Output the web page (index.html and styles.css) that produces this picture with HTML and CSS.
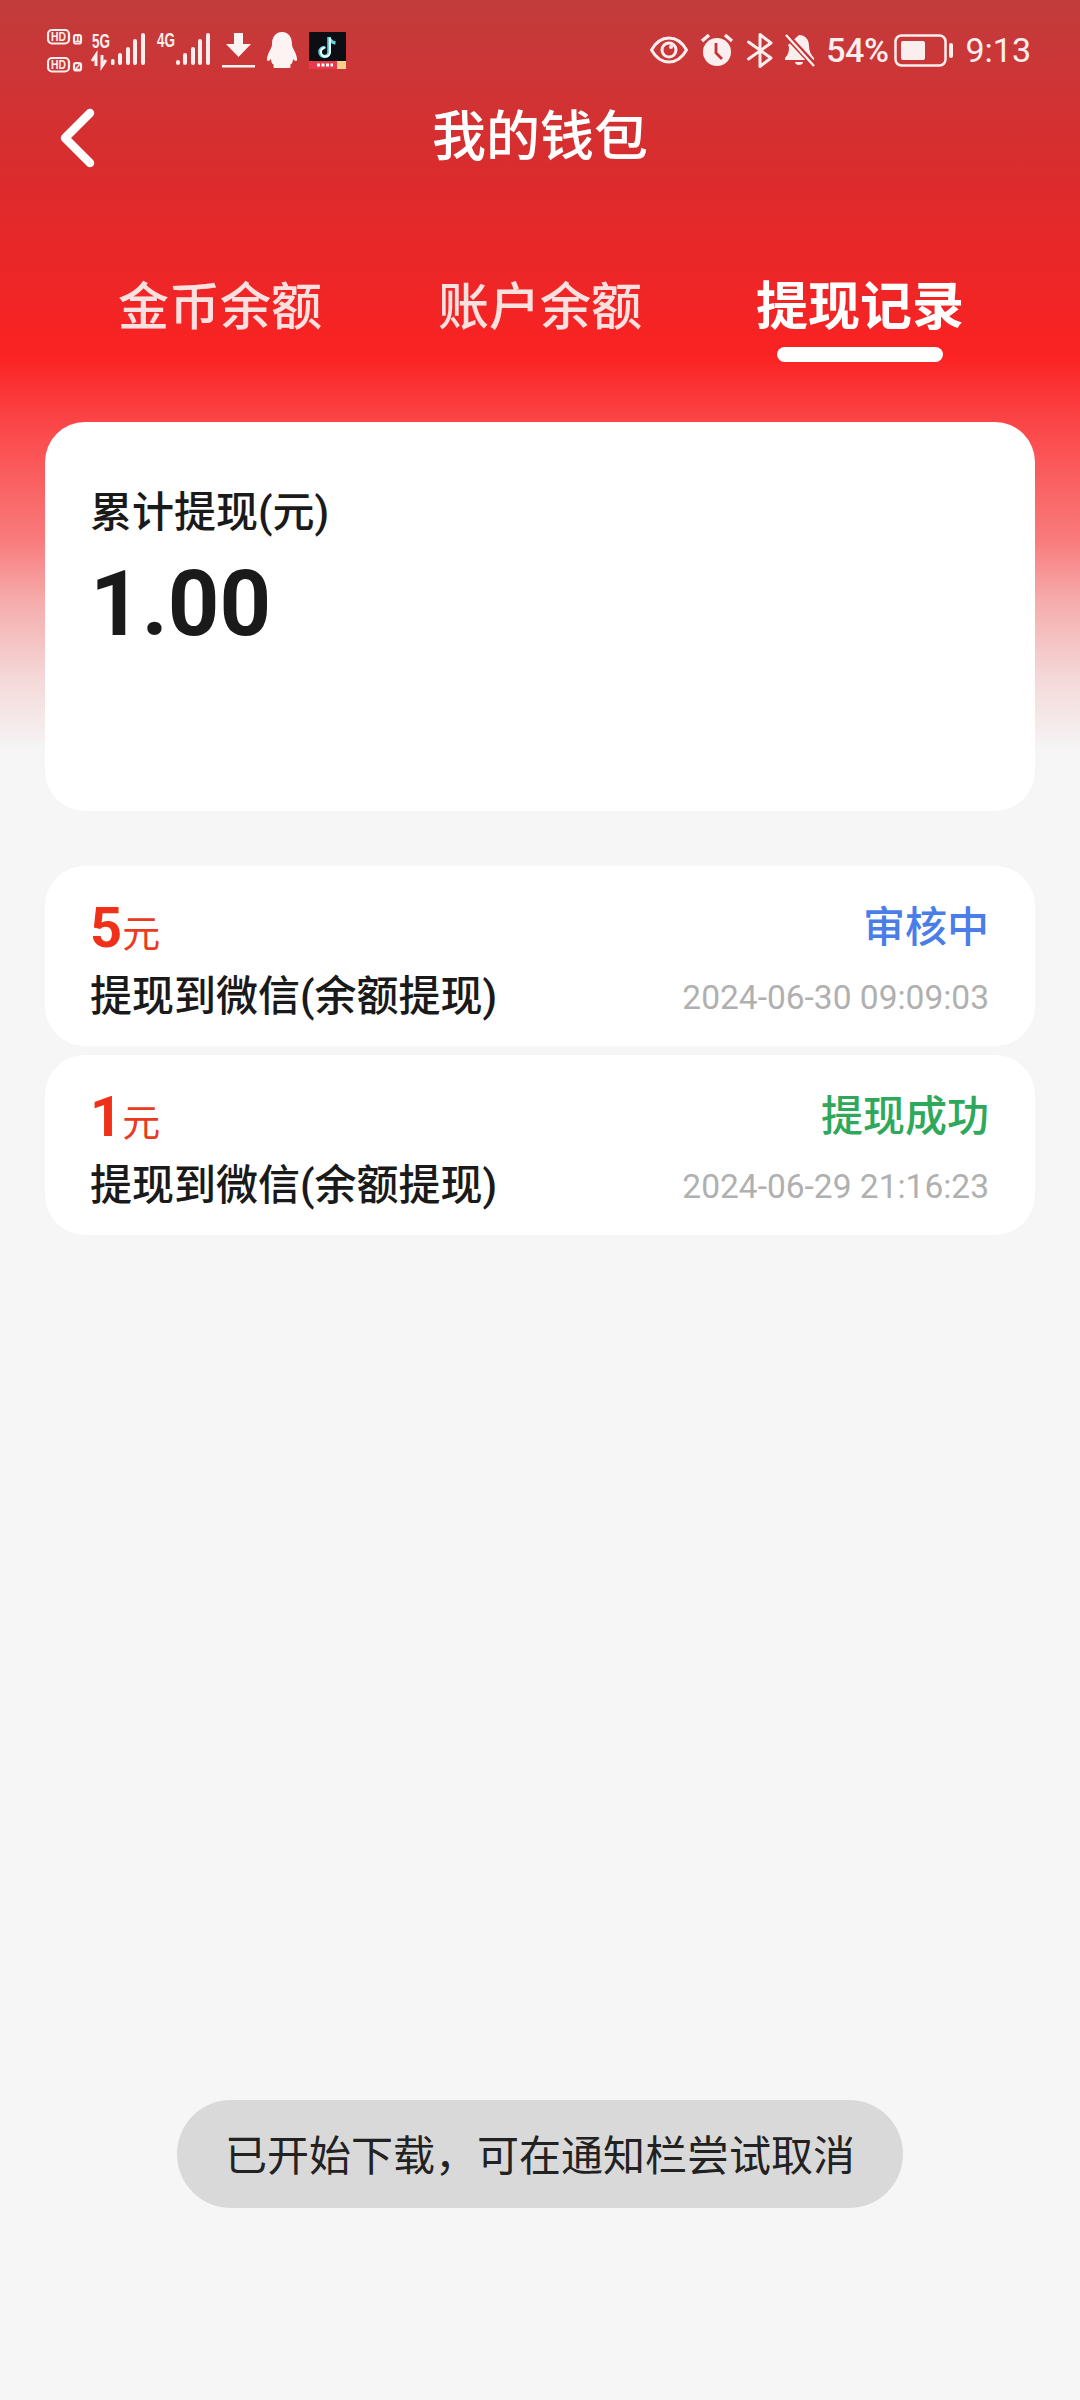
FILE: index.html
```html
<!DOCTYPE html>
<html>
<head>
    <title>我的钱包</title>
    <link rel="stylesheet" href="styles.css">
</head>
<body>
    <div class="status">
        <div class="status-left">
            <svg class="sim" width="165" height="50" viewBox="0 0 165 50">
                <g fill="none" stroke="#fbeeee" stroke-width="2.200">
                    <rect x="1" y="5" width="21" height="13.500" rx="4"/>
                    <rect x="1" y="33" width="21" height="13.500" rx="4"/>
                    <rect x="27" y="10" width="7" height="8.500" rx="2"/>
                    <rect x="27" y="38" width="7" height="7.500" rx="2"/>
                </g>
                <text class="sim-hd" x="11.500" y="16" textLength="15" lengthAdjust="spacingAndGlyphs">HD</text>
                <text class="sim-hd" x="11.500" y="44" textLength="15" lengthAdjust="spacingAndGlyphs">HD</text>
                <text class="sim-num" x="30.500" y="17">1</text>
                <text class="sim-num" x="30.500" y="45">2</text>
                <text class="sim-net" x="45" y="23" textLength="18" lengthAdjust="spacingAndGlyphs">5G</text>
                <text class="sim-net" x="110" y="22" textLength="18" lengthAdjust="spacingAndGlyphs">4G</text>
                <path d="M49 41V30l-4 6M55 30v11l4-6" fill="none" stroke="#fbeeee" stroke-width="3"/>
                <g fill="#fbeeee">
                    <rect x="64" y="34" width="3.500" height="6" rx="1.500"/>
                    <rect x="71" y="28" width="4" height="12" rx="2"/>
                    <rect x="79" y="22" width="4" height="18" rx="2"/>
                    <rect x="86" y="14" width="4" height="26" rx="2"/>
                    <rect x="94" y="8" width="4" height="32" rx="2"/>
                    <rect x="129" y="35" width="4" height="5" rx="2"/>
                    <rect x="136" y="28" width="4" height="12" rx="2"/>
                    <rect x="144" y="22" width="4" height="18" rx="2"/>
                    <rect x="151" y="14" width="4" height="26" rx="2"/>
                    <rect x="159" y="8" width="4" height="32" rx="2"/>
                </g>
            </svg>
            <svg width="33" height="36" viewBox="0 0 33 36">
                <path d="M12 1h9v11h8L16.500 25 4 12h8z" fill="#fdf3f3"/>
                <rect y="33" width="33" height="2.500" fill="#fdf3f3"/>
            </svg>
            <svg width="32" height="36" viewBox="0 0 32 36">
                <path d="M16 0c7 0 10 6 10 12 0 3 1 4 3 8 2 5 3 9 1 9-1 0-2-1-3-2 0 3-1 5-3 6 1 1 1 3-1 3H9c-2 0-2-2-1-3-2-1-3-3-3-6-1 1-2 2-3 2-2 0-1-4 1-9 2-4 3-5 3-8C6 6 9 0 16 0z" fill="#fdf3f3"/>
            </svg>
            <svg width="37" height="37" viewBox="0 0 37 37">
                <rect width="37" height="37" fill="#0d0d14"/>
                <path d="M20 5v15a4.500 4.500 0 1 1-4.500-4.500M20 5c.5 3 3 5.500 6.500 6" fill="none" stroke="#5fd5dc" stroke-width="3.500"/>
                <path d="M21 6v14a4.500 4.500 0 1 1-4.500-4.500" fill="none" stroke="#fff" stroke-width="2"/>
                <rect y="29" width="28" height="8" fill="#e83a4a"/>
                <rect x="28" y="29" width="9" height="8" fill="#f4d08c"/>
                <path d="M8 33h16" stroke="#fff" stroke-width="3" stroke-dasharray="3 1.500"/>
            </svg>
        </div>
        <div class="status-right">
            <svg class="eye" width="38" height="28" viewBox="0 0 38 28">
                <path d="M1.500 14C6 6 12 2 19 2s13 4 17.500 12C32 22 26 26 19 26S6 22 1.500 14z" fill="none" stroke="#fbeeee" stroke-width="3"/>
                <circle cx="19" cy="14" r="7" fill="none" stroke="#fbeeee" stroke-width="3"/>
                <circle cx="21" cy="11" r="2" fill="#fbeeee"/>
            </svg>
            <svg class="alarm" width="34" height="34" viewBox="0 0 34 34">
                <circle cx="17" cy="19" r="14" fill="#fbeeee"/>
                <path d="M16 10v10l6 6" fill="none" stroke="#c9302f" stroke-width="2.800"/>
                <path d="M2 8l7-6M32 8l-7-6" stroke="#fbeeee" stroke-width="3.500"/>
            </svg>
            <svg class="bt" width="27" height="35" viewBox="0 0 27 35">
                <path d="M1.500 9L24 25 13 33.500V1.500L24 10 1.500 26" fill="none" stroke="#fbeeee" stroke-width="3" stroke-linecap="round" stroke-linejoin="round"/>
            </svg>
            <svg class="bell" width="31" height="33" viewBox="0 0 31 33">
                <path d="M15 1c6 0 10 4 10 11 0 5 2 9 5 12v2H1v-2c3-3 4-6 4-11l-1-2zM11 28h8c0 2-2 3-4 3s-4-1-4-3z" fill="#fbeeee"/>
                <path d="M3 2l27 29" stroke="#c9302f" stroke-width="6"/>
                <path d="M2 1l28 31" stroke="#fbeeee" stroke-width="2.500"/>
            </svg>
            <span class="status-text percent">54%</span>
            <svg class="battery" width="60" height="33" viewBox="0 0 60 33">
                <rect x="1.500" y="1.500" width="50" height="30" rx="6" fill="none" stroke="#fbeeee" stroke-width="2.500"/>
                <rect x="7" y="7" width="24" height="19" rx="2" fill="#fbeeee"/>
                <rect x="55" y="9" width="4" height="15" rx="2" fill="#fbeeee"/>
            </svg>
            <span class="status-text">9:13</span>
        </div>
    </div>

    <div class="nav">
        <svg width="36" height="60" viewBox="0 0 36 60">
            <path d="M31 5L6 30l25 25" fill="none" stroke="#fff" stroke-width="8.500" stroke-linecap="round" stroke-linejoin="round"/>
        </svg>
        <div class="nav-title">我的钱包</div>
    </div>

    <div class="tabs">
        <div class="tab">金币余额</div>
        <div class="tab">账户余额</div>
        <div class="tab active">提现记录</div>
    </div>

    <div class="summary">
        <div class="summary-label">累计提现(元)</div>
        <div class="summary-value">1.00</div>
    </div>

    <div class="record">
        <div class="record-top">
            <div class="amount"><b>5</b>元</div>
            <div class="state pending">审核中</div>
        </div>
        <div class="record-bottom">
            <div class="record-title">提现到微信(余额提现)</div>
            <div class="record-time">2024-06-30 09:09:03</div>
        </div>
    </div>
    <div class="record">
        <div class="record-top">
            <div class="amount"><b>1</b>元</div>
            <div class="state success">提现成功</div>
        </div>
        <div class="record-bottom">
            <div class="record-title">提现到微信(余额提现)</div>
            <div class="record-time">2024-06-29 21:16:23</div>
        </div>
    </div>

    <div class="toast">已开始下载，可在通知栏尝试取消</div>
</body>
</html>
```
FILE: styles.css
```css
html, body {
    margin: 0;
    height: 2400px;
    overflow: hidden;
}
body {
    position: relative;
    font-family: Roboto, "Noto Sans CJK SC", sans-serif;
    color: #1a1a1a;
    background: linear-gradient(180deg, #c23c3c 0, #dc2b2d 180px, #fb2222 355px, #fb4446 420px, #f97b7c 540px, #f6abab 600px, #f4d8d8 678px, #f6f6f6 752px);
}
.status {
    height: 100px;
    padding: 0 49px 0 47px;
    box-sizing: border-box;
    display: flex;
    justify-content: space-between;
    align-items: center;
}
.status-left, .status-right {
    display: flex;
    align-items: center;
}
.status-left {
    gap: 11px;
}
.sim {
    margin-right: -1px;
}
.sim-hd {
    font: bold 12px "Liberation Sans", sans-serif;
    fill: #fbeeee;
    text-anchor: middle;
}
.sim-num {
    font: bold 10px "Liberation Sans", sans-serif;
    fill: #fbeeee;
    text-anchor: middle;
}
.sim-net {
    font: bold 21px "Liberation Sans", sans-serif;
    fill: #fbeeee;
}
.eye {
    margin-right: 12px;
}
.alarm {
    margin-right: 13px;
}
.bt {
    margin-right: 10px;
}
.bell {
    margin-right: 11px;
}
.battery {
    margin: 0 11px 0 6px;
}
.status-text {
    font-size: 34px;
    color: #fbeeee;
}
.percent {
    font-weight: 500;
    letter-spacing: -0.5px;
}
.nav {
    height: 75px;
    padding: 0 59px;
    display: grid;
    grid-template-columns: 1fr auto 1fr;
    align-items: center;
}
.nav-title {
    font-size: 54px;
    font-weight: 500;
    color: #fff;
    line-height: 75px;
}
.tabs {
    margin-top: 98px;
    padding: 0 60px;
    display: grid;
    grid-template-columns: repeat(3, 1fr);
    height: 89px;
}
.tab {
    font-size: 51px;
    font-weight: 500;
    line-height: 70px;
    text-align: center;
    color: #fbe0e0;
}
.tab.active {
    font-size: 52px;
    font-weight: bold;
    color: #fff;
}
.tab.active::after {
    content: "";
    display: block;
    width: 166px;
    height: 15px;
    margin: 4px auto 0;
    border-radius: 8px;
    background: #fff;
}
.summary {
    margin: 60px 45px 55px;
    height: 389px;
    box-sizing: border-box;
    padding: 66px 45px 0;
    background: #fff;
    border-radius: 40px;
}
.summary-label {
    font-size: 42px;
    font-weight: 500;
    line-height: 50px;
}
.summary-value {
    margin-top: 17px;
    font-size: 90px;
    font-weight: bold;
    line-height: 100px;
}
.record {
    margin: 0 45px 9px;
    height: 180px;
    box-sizing: border-box;
    padding: 29px 46px 0 45px;
    background: #fff;
    border-radius: 40px;
}
.record-top, .record-bottom {
    display: flex;
    justify-content: space-between;
    align-items: center;
}
.record-top {
    height: 56px;
}
.record-bottom {
    height: 58px;
    margin-top: 12px;
}
.amount {
    margin-top: 9px;
    font-size: 38px;
    color: #ea3b20;
}
.amount b {
    font-size: 56px;
    color: #f03018;
}
.state {
    font-size: 42px;
    font-weight: 500;
}
.pending {
    color: #4a7de8;
}
.success {
    color: #2ea85a;
}
.record-title {
    font-size: 42px;
    font-weight: 500;
}
.record-time {
    margin-top: 10px;
    font-size: 33.500px;
    color: #b0b0b0;
}
.toast {
    position: absolute;
    left: 177px;
    top: 2100px;
    width: 726px;
    height: 108px;
    line-height: 113px;
    border-radius: 54px;
    background: #d9d9d9;
    color: #222;
    font-size: 42px;
    text-align: center;
}
```
